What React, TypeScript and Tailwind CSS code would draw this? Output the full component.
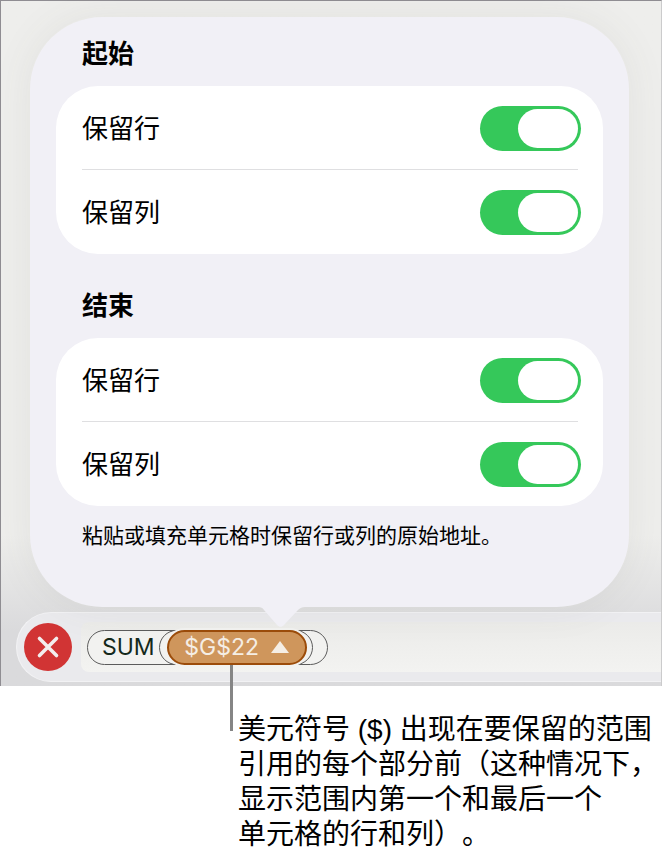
import { useState } from 'react';

const sections = [
  { id: 'start', title: '起始', options: ['保留行', '保留列'] },
  { id: 'end', title: '结束', options: ['保留行', '保留列'] },
];

function Toggle({ id }: { id: string }) {
  const [on, setOn] = useState(true);
  return (
    <input
      id={id}
      type="checkbox"
      role="switch"
      checked={on}
      onChange={() => setOn(!on)}
      className="relative h-[45px] w-[101px] shrink-0 cursor-pointer appearance-none rounded-full bg-[#d9d9dc] before:absolute before:top-[3px] before:left-[3px] before:h-[39px] before:w-[60px] before:rounded-full before:bg-white checked:bg-[#35c85a] checked:before:left-[38px]"
    />
  );
}

function PreserveGroup({ section }: { section: (typeof sections)[number] }) {
  return (
    <section>
      <h2 className="pl-[26px] text-[26px] leading-9 font-bold">{section.title}</h2>
      <div className="mt-4 rounded-[42px] bg-white pl-[26px]">
        {section.options.map((option, i) => (
          <div key={option}>
            {i > 0 && <hr className="-mt-px mr-[25px] border-[#dfdfe1]" />}
            <div className="flex h-[84px] items-center justify-between pr-[22px]">
              <label htmlFor={`${section.id}-${i}`} className="pb-[3px] text-[26px] leading-9">
                {option}
              </label>
              <Toggle id={`${section.id}-${i}`} />
            </div>
          </div>
        ))}
      </div>
    </section>
  );
}

function Popover() {
  return (
    <div className="relative z-10 mr-8 ml-[29px] rounded-[72px] bg-[#f1f0f6] px-[26px] pt-[17px] pb-[57px] shadow-[0_0_40px_rgba(90,90,80,0.08)]">
      <div className="flex flex-col gap-8">
        {sections.map((section) => (
          <PreserveGroup key={section.id} section={section} />
        ))}
      </div>
      <p className="mt-3 pl-[26px] text-[21px] leading-8 whitespace-nowrap">
        粘贴或填充单元格时保留行或列的原始地址。
      </p>
      {/* Arrow pointing at the cell reference */}
      <svg
        className="absolute top-full left-[227px] -mt-px h-[22px] w-12"
        viewBox="0 0 48 22"
        fill="#f1f0f6"
      >
        <path d="M0 0h48v1c-3 0-5 1-7 3L27 19c-2 2.4-5 2.4-7 0L7 4C5 1 3 1 0 1z" />
      </svg>
    </div>
  );
}

function FormulaBar() {
  return (
    <div className="mt-[5px] ml-[15px] flex h-[70px] items-center rounded-l-full border border-r-0 border-[#f2f2f4] bg-[#eaeaed] pl-[7px]">
      <button
        aria-label="取消"
        className="flex size-12 shrink-0 items-center justify-center rounded-full bg-[#d13434]"
      >
        <svg className="size-6" viewBox="0 0 24 24" fill="none" stroke="#f3eeee" strokeWidth="3.6" strokeLinecap="round">
          <path d="M3.5 3.5l17 17M20.5 3.5l-17 17" />
        </svg>
      </button>
      <div className="ml-[9px] flex h-[50px] flex-1 items-center rounded-l-lg bg-linear-to-b from-[#ebebe9] to-[#f3f3f1] pl-[6px] font-['Inter','Noto_Sans_CJK_SC',sans-serif]">
        <div className="flex h-[35px] items-center rounded-full border border-[#5c5c5c] bg-[#f2f2f0] pr-[14px] pl-[14px] text-[23px] text-[#14291b]">
          <span>SUM</span>
          <div className="ml-1 flex h-[35px] items-center rounded-full border border-[#5c5c5c] pr-[5px] pl-[7px]">
            <div className="relative">
              <button className="flex h-[35px] w-[140px] items-center justify-center gap-3 rounded-full border-2 border-[#9c4c0a] bg-[#cf965c] text-[#f5eee5] ring-2 ring-[#f2f2f0]">
                <span>$G$22</span>
                <svg className="h-3 w-[18px]" viewBox="0 0 18 12" fill="#f5eee5">
                  <path d="M9 0l9 12H0z" />
                </svg>
              </button>
              {/* Leader line down to the caption */}
              <span className="absolute top-full left-[63px] h-[66px] w-[3px] bg-[#858585]" />
            </div>
          </div>
        </div>
      </div>
    </div>
  );
}

export default function App() {
  return (
    <main className="bg-white font-['Noto_Sans_CJK_SC',sans-serif] text-black [text-spacing-trim:space-all]">
      <div className="border-x border-t border-t-[#8f8d92] border-r-[#cbcbcc] border-l-[#8f8d92] bg-linear-to-b from-[#eeeeec] from-78% to-[#dadadc] to-92% pt-4 pb-1">
        <Popover />
        <FormulaBar />
      </div>
      <p className="mt-[26px] ml-[238px] font-['Liberation_Sans','Noto_Sans_CJK_SC',sans-serif] text-[28px] leading-[35px] whitespace-nowrap">
        美元符号 ($) 出现在要保留的范围
        <br />
        引用的每个部分前（这种情况下，
        <br />
        显示范围内第一个和最后一个
        <br />
        单元格的行和列）。
      </p>
    </main>
  );
}
